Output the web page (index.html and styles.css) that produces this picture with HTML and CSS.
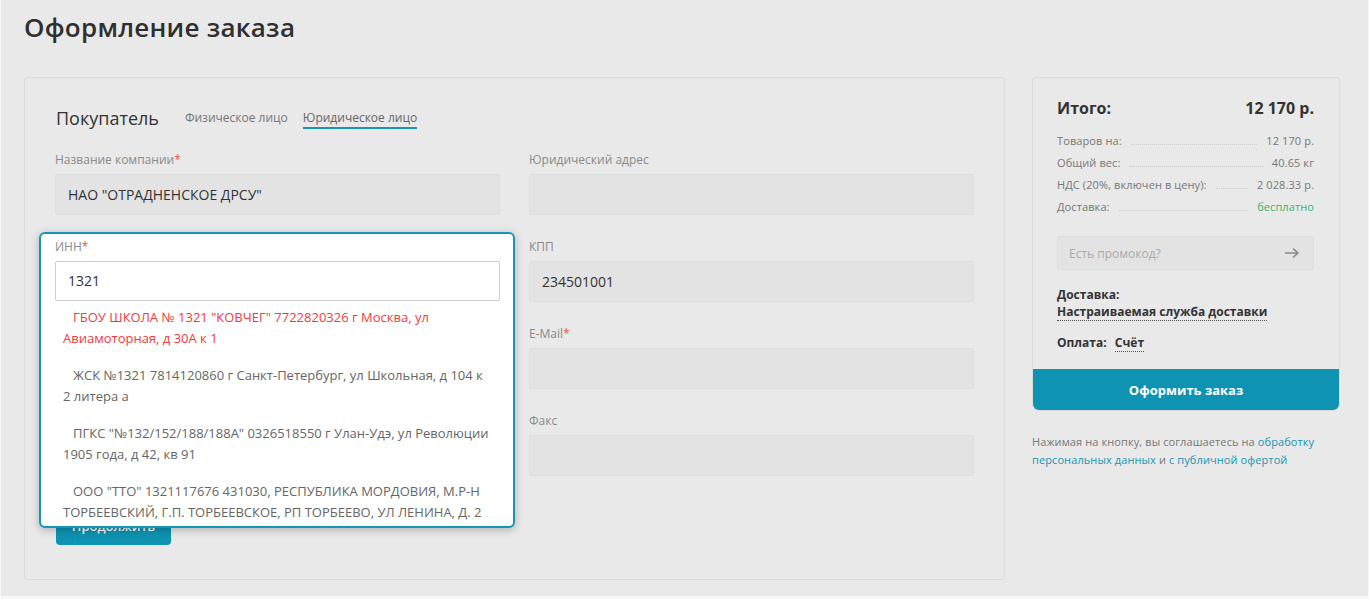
FILE: index.html
```html
<!DOCTYPE html>
<html lang="ru">
<head>
    <meta charset="UTF-8">
    <meta name="viewport" content="width=device-width, initial-scale=1.0">
    <title>Оформление заказа</title>
    <link rel="stylesheet" href="styles.css">
</head>
<body>
<div class="page">
    <h1>Оформление заказа</h1>

    <div class="checkout">
        <div class="card form-card">
            <div class="buyer-head">
                <span class="buyer-title">Покупатель</span>
                <span class="tab">Физическое лицо</span>
                <span class="tab active">Юридическое лицо</span>
            </div>

            <div class="fields">
                <div class="field">
                    <label>Название компании<span class="req">*</span></label>
                    <div class="input">НАО "ОТРАДНЕНСКОЕ ДРСУ"</div>
                </div>
                <div class="field">
                    <label>Юридический адрес</label>
                    <div class="input"></div>
                </div>

                <div class="field field-open">
                    <div class="popup">
                        <label>ИНН<span class="req">*</span></label>
                        <div class="input input-focus">1321</div>
                        <ul class="suggest">
                            <li class="current">ГБОУ ШКОЛА № 1321 "КОВЧЕГ" 7722820326 г Москва, ул Авиамоторная, д 30А к 1</li>
                            <li>ЖСК №1321 7814120860 г Санкт-Петербург, ул Школьная, д 104 к 2 литера а</li>
                            <li>ПГКС "№132/152/188/188А" 0326518550 г Улан-Удэ, ул Революции 1905 года, д 42, кв 91</li>
                            <li>ООО "ТТО" 1321117676 431030, РЕСПУБЛИКА МОРДОВИЯ, М.Р-Н ТОРБЕЕВСКИЙ, Г.П. ТОРБЕЕВСКОЕ, РП ТОРБЕЕВО, УЛ ЛЕНИНА, Д. 2</li>
                            <li>МБОУ "ШКОЛА № 1321" 1321000000 г Москва</li>
                        </ul>
                    </div>
                </div>
                <div class="field">
                    <label>КПП</label>
                    <div class="input">234501001</div>
                </div>

                <div class="field field-under">
                    <label>Контактное лицо<span class="req">*</span></label>
                    <div class="input"></div>
                </div>
                <div class="field">
                    <label>E-Mail<span class="req">*</span></label>
                    <div class="input"></div>
                </div>

                <div class="field field-under">
                    <label>Телефон<span class="req">*</span></label>
                    <div class="input"></div>
                </div>
                <div class="field">
                    <label>Факс</label>
                    <div class="input"></div>
                </div>
            </div>

            <button class="next-btn">Продолжить</button>
        </div>

        <div class="side">
            <div class="card total-card">
                <div class="total-body">
                    <div class="total-head">
                        <span>Итого:</span>
                        <span>12 170 р.</span>
                    </div>

                    <div class="line"><span>Товаров на:</span><i></i><span>12 170 р.</span></div>
                    <div class="line"><span>Общий вес:</span><i></i><span>40.65 кг</span></div>
                    <div class="line"><span>НДС (20%, включен в цену):</span><i></i><span>2 028.33 р.</span></div>
                    <div class="line"><span>Доставка:</span><i></i><span class="free">бесплатно</span></div>

                    <div class="promo">
                        <span>Есть промокод?</span>
                        <svg width="16" height="12" viewBox="0 0 16 12">
                            <path d="M1 6h13M9 1.5L14 6l-5 4.5" fill="none" stroke="#8a8a8a" stroke-width="1.6"/>
                        </svg>
                    </div>

                    <div class="info">
                        <div>Доставка:</div>
                        <span class="dotted">Настраиваемая служба доставки</span>
                    </div>
                    <div class="info pay">
                        Оплата: <span class="dotted">Счёт</span>
                    </div>
                </div>
                <button class="order-btn">Оформить заказ</button>
            </div>

            <p class="agree">
                Нажимая на кнопку, вы соглашаетесь на <a href="#">обработку персональных данных</a> и <a href="#">с публичной офертой</a>
            </p>
        </div>
    </div>
</div>
</body>
</html>
```

FILE: styles.css
```css
html {
    background: #f7f7f7;
}

body {
    margin: 0;
    font-family: "Open Sans", Arial, sans-serif;
    color: #333;
}

.page {
    margin: 0 1px;
    height: 596px;
    padding: 9px 0 0 23px;
    box-sizing: border-box;
    background: #e9e9e9;
    overflow: hidden;
}

h1 {
    margin: 0;
    font-size: 26px;
    line-height: 36px;
    font-weight: 600;
    letter-spacing: 0.25px;
    color: #2f2f2f;
}

.checkout {
    display: flex;
    gap: 27px;
    margin-top: 32px;
}

.card {
    border: 1px solid #dcdcdc;
    border-radius: 3px;
    background: #e9e9e9;
}

/* left form */

.form-card {
    width: 981px;
    box-sizing: border-box;
    padding: 28px 30px 34px 30px;
}

.buyer-head {
    display: flex;
    align-items: center;
    gap: 15px;
    height: 24px;
    padding-left: 1px;
}

.buyer-title {
    font-size: 18px;
    margin-right: 11px;
}

.tab {
    font-size: 12px;
    color: #777;
    padding-bottom: 1px;
}

.tab.active {
    color: #666;
    border-bottom: 2px solid #1596b3;
    margin-bottom: -2px;
}

.fields {
    display: grid;
    grid-template-columns: 445px 445px;
    column-gap: 29px;
    row-gap: 24px;
    margin-top: 22px;
}

.field label {
    display: block;
    font-size: 12px;
    line-height: 16px;
    color: #8a8a8a;
    margin-bottom: 6px;
}

/* hidden under the open suggestion list */
.field-under {
    visibility: hidden;
}

.req {
    color: #e9573f;
}

.input {
    height: 41px;
    box-sizing: border-box;
    border: 1px solid #dedede;
    border-radius: 2px;
    background: #e3e3e3;
    padding: 0 12px;
    font-size: 14px;
    line-height: 39px;
    color: #333;
}

.field-open {
    position: relative;
    height: 63px;
}

.popup {
    position: absolute;
    z-index: 2;
    top: -7px;
    left: -16px;
    width: 476px;
    height: 296px;
    box-sizing: border-box;
    padding: 5px 13px 0 14px;
    background: #fff;
    border: 2px solid #1596b3;
    border-radius: 6px;
    box-shadow: 0 2px 8px rgba(0, 0, 0, 0.25);
    overflow: hidden;
}

.input-focus {
    height: 40px;
    background: #fff;
    border-color: #cfcfcf;
    line-height: 38px;
}

.suggest {
    list-style: none;
    margin: 6px 0 0;
    padding: 0 9px 0 8px;
    display: flex;
    flex-direction: column;
    gap: 16px;
}

.suggest li {
    font-size: 13px;
    line-height: 21px;
    color: #666;
    text-indent: 10px;
}

.suggest li.current {
    color: #f33b3b;
}

.next-btn {
    display: block;
    margin: 31px 0 0 1px;
    width: 115px;
    height: 38px;
    border: none;
    border-radius: 4px;
    background: #0f93b2;
    color: #fff;
    font-family: inherit;
    font-size: 13px;
    font-weight: 600;
}

/* right summary */

.side {
    width: 308px;
}

.total-card {
    overflow: hidden;
    border-radius: 3px 3px 7px 7px;
}

.total-body {
    padding: 20px 25px 18px 24px;
}

.total-head {
    display: flex;
    justify-content: space-between;
    font-size: 16px;
    line-height: 20px;
    font-weight: 700;
    color: #333;
    margin-bottom: 12px;
}

.line {
    display: flex;
    align-items: baseline;
    font-size: 11px;
    line-height: 22px;
    color: #777;
    letter-spacing: 0.1px;
}

.line i {
    flex: 1;
    margin: 0 9px;
    border-bottom: 1px dotted #cfcfcf;
}

.line .free {
    color: #3cb26a;
}

.promo {
    display: flex;
    align-items: center;
    justify-content: space-between;
    height: 34px;
    box-sizing: border-box;
    margin-top: 18px;
    padding: 0 13px 0 11px;
    border: 1px solid #dedede;
    border-radius: 2px;
    background: #e3e3e3;
    font-size: 12px;
    color: #aaa;
}

.info {
    margin-top: 16px;
    font-size: 12px;
    font-weight: 700;
    line-height: 17px;
    color: #333;
}

.info.pay {
    margin-top: 14px;
}

.info.pay .dotted {
    margin-left: 5px;
}

.dotted {
    border-bottom: 1px dotted #555;
}

.order-btn {
    display: block;
    width: 100%;
    height: 41px;
    border: none;
    background: #0f93b2;
    color: #fff;
    font-family: inherit;
    font-size: 13px;
    font-weight: 700;
}

.agree {
    margin: 22px 0 0;
    font-size: 11px;
    line-height: 18px;
    color: #777;
    letter-spacing: 0.1px;
}

.agree a {
    color: #1596b3;
    text-decoration: none;
}
```
